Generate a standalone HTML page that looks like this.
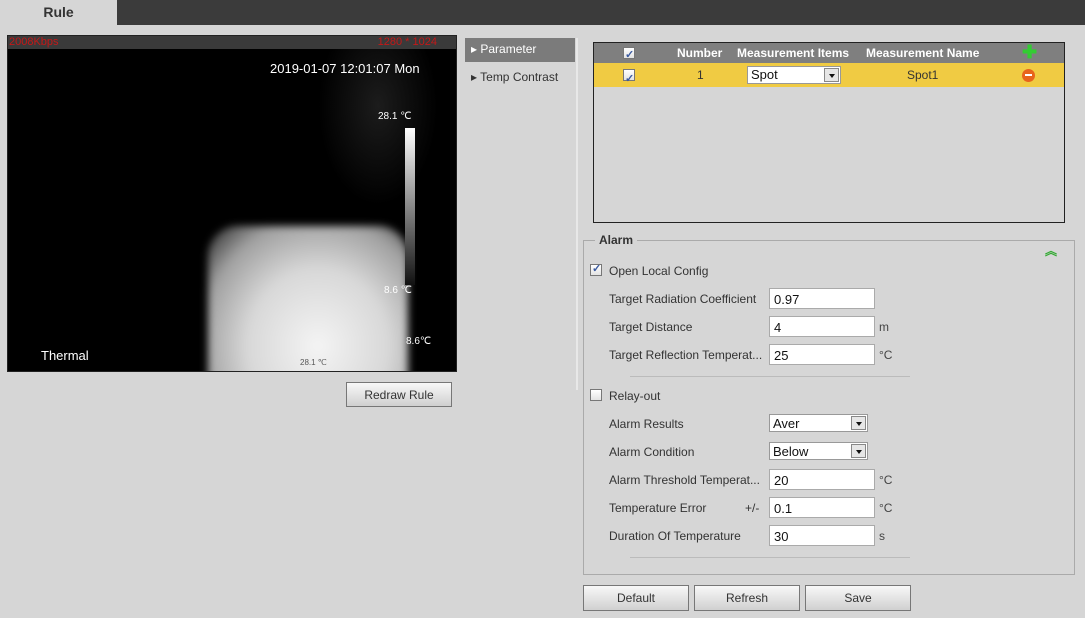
<!DOCTYPE html>
<html><head><meta charset="utf-8"><style>
*{box-sizing:border-box}
body{margin:0;width:1085px;height:618px;background:#d6d6d6;font-family:"Liberation Sans",Arial,sans-serif;font-size:12px;color:#333;position:relative;overflow:hidden}
.a{position:absolute}
.inp{position:absolute;width:106px;height:21px;background:#fff;border:1px solid #aaa;font-size:13px;color:#111;padding:3px 4px}
.sel{position:absolute;width:99px;height:18px;background:#fff;border:1px solid #999;font-size:13px;color:#111;padding:1px 3px}
.sel i{position:absolute;right:1px;top:1px;width:15px;height:14px;background:#e6e6e6;border:1px solid #888}
.sel i:after{content:"";position:absolute;left:4px;top:5px;border:3px solid transparent;border-top:4px solid #111}
.lbl{position:absolute;left:609px;color:#333;font-size:12px}
.cb{position:absolute;width:12px;height:12px;border:1px solid #777;background:linear-gradient(#fff,#e3e3e3)}
.cb.on:after{content:"✓";position:absolute;left:1px;top:-3px;font-size:11px;color:#3a5aa0;font-weight:bold}
.btn{position:absolute;height:26px;border:1px solid #777;background:linear-gradient(#f8f8f8,#d0d0d0);text-align:center;line-height:24px;font-size:12px;color:#333}
.u{position:absolute;left:879px;font-size:12px;color:#444}
</style></head><body>
<div class="a" style="left:0;top:0;width:1085px;height:25px;background:#3b3b3b"></div>
<div class="a" style="left:0;top:0;width:117px;height:25px;background:#d6d6d6;text-align:center;font-weight:bold;font-size:14px;line-height:24px;color:#333">Rule</div>

<div class="a" style="left:7px;top:35px;width:450px;height:337px;background:#000;border:1px solid #222;overflow:hidden">
 <div class="a" style="left:310px;top:-30px;width:120px;height:200px;border-radius:50%;background:radial-gradient(ellipse,#1c1c1c,#000 70%)"></div>
 <div class="a" style="left:200px;top:190px;width:200px;height:160px;border-radius:30px 30px 0 0;background:radial-gradient(ellipse at 55% 75%,#f4f4f4 0%,#d8d8d8 45%,#a0a0a0 75%,#222 100%);filter:blur(4px)"></div>
 <div class="a" style="left:0;top:0;width:450px;height:13px;background:#3a3a3a"></div>
 <div class="a" style="left:1px;top:0;color:#c41818;font-size:11px">2008Kbps</div>
 <div class="a" style="right:19px;top:0;color:#c41818;font-size:11px">1280 * 1024</div>
 <div class="a" style="left:262px;top:25px;color:#fff;font-size:13px">2019-01-07 12:01:07 Mon</div>
 <div class="a" style="left:370px;top:75px;color:#fff;font-size:10px">28.1 ℃</div>
 <div class="a" style="left:397px;top:92px;width:10px;height:157px;background:linear-gradient(#fff,#111)"></div>
 <div class="a" style="left:376px;top:249px;color:#fff;font-size:10px">8.6 ℃</div>
 <div class="a" style="left:398px;top:300px;color:#fff;font-size:10px">8.6℃</div>
 <div class="a" style="left:33px;top:312px;color:#fff;font-size:13px">Thermal</div>
 <div class="a" style="left:292px;top:322px;color:#555;font-size:8px">28.1 ℃</div>
</div>
<div class="btn" style="left:346px;top:382px;width:106px;height:25px">Redraw Rule</div>

<div class="a" style="left:465px;top:38px;width:110px;height:24px;background:#7b7b7b;color:#fff;font-size:12px;line-height:23px;padding-left:6px">▸ Parameter</div>
<div class="a" style="left:465px;top:66px;width:110px;height:24px;color:#333;font-size:12px;line-height:23px;padding-left:6px">▸ Temp Contrast</div>
<div class="a" style="left:576px;top:38px;width:2px;height:352px;background:#e8e8e8"></div>

<div class="a" style="left:593px;top:42px;width:472px;height:181px;border:1px solid #222;background:#d6d6d6">
 <div class="a" style="left:0;top:0;width:470px;height:20px;background:#7f7f7f;color:#fff;font-weight:bold;font-size:12px;line-height:20px">
  <div class="cb on" style="left:29px;top:4px"></div>
  <span class="a" style="left:83px">Number</span>
  <span class="a" style="left:143px">Measurement Items</span>
  <span class="a" style="left:272px">Measurement Name</span>
  <span class="a" style="left:428px;top:-1px;color:#3c3;font-size:18px">✚</span>
 </div>
 <div class="a" style="left:0;top:20px;width:470px;height:24px;background:#f0cb43;font-size:12px;line-height:24px;color:#333">
  <div class="cb on" style="left:29px;top:6px"></div>
  <span class="a" style="left:103px">1</span>
  <div class="sel" style="left:153px;top:3px;width:94px;line-height:14px">Spot<i></i></div>
  <span class="a" style="left:313px">Spot1</span>
  <span class="a" style="left:428px;top:6px;width:13px;height:13px;border-radius:50%;background:#e8641c"><span class="a" style="left:3px;top:5px;width:7px;height:2px;background:#fff"></span></span>
 </div>
</div>

<div class="a" style="left:583px;top:240px;width:492px;height:335px;border:1px solid #aaa"></div>
<div class="a" style="left:595px;top:233px;padding:0 4px;background:#d6d6d6;font-weight:bold;color:#333">Alarm</div>
<div class="a" style="left:1045px;top:242px;color:#3a3;font-size:12px;font-weight:bold">︽</div>

<div class="cb on" style="left:590px;top:264px"></div>
<div class="a" style="left:609px;top:264px">Open Local Config</div>
<div class="lbl" style="top:292px">Target Radiation Coefficient</div><div class="inp" style="left:769px;top:288px">0.97</div>
<div class="lbl" style="top:320px">Target Distance</div><div class="inp" style="left:769px;top:316px">4</div><div class="u" style="top:320px">m</div>
<div class="lbl" style="top:348px">Target Reflection Temperat...</div><div class="inp" style="left:769px;top:344px">25</div><div class="u" style="top:348px">°C</div>
<div class="a" style="left:630px;top:376px;width:280px;height:1px;background:#bbb"></div>
<div class="cb" style="left:590px;top:389px"></div>
<div class="a" style="left:609px;top:389px">Relay-out</div>
<div class="lbl" style="top:417px">Alarm Results</div><div class="sel" style="left:769px;top:414px">Aver<i></i></div>
<div class="lbl" style="top:445px">Alarm Condition</div><div class="sel" style="left:769px;top:442px">Below<i></i></div>
<div class="lbl" style="top:473px">Alarm Threshold Temperat...</div><div class="inp" style="left:769px;top:469px">20</div><div class="u" style="top:473px">°C</div>
<div class="lbl" style="top:501px">Temperature Error</div><div class="a" style="left:745px;top:501px">+/-</div><div class="inp" style="left:769px;top:497px">0.1</div><div class="u" style="top:501px">°C</div>
<div class="lbl" style="top:529px">Duration Of Temperature</div><div class="inp" style="left:769px;top:525px">30</div><div class="u" style="top:529px">s</div>
<div class="a" style="left:630px;top:557px;width:280px;height:1px;background:#bbb"></div>

<div class="btn" style="left:583px;top:585px;width:106px">Default</div>
<div class="btn" style="left:694px;top:585px;width:106px">Refresh</div>
<div class="btn" style="left:805px;top:585px;width:106px">Save</div>
</body></html>
